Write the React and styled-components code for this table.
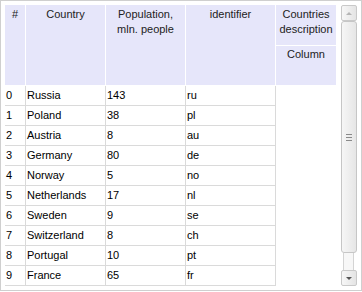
import React from 'react';
import styled, { createGlobalStyle } from 'styled-components';

const Global = createGlobalStyle`
    body {
        margin: 0;
        background: white;
        font-family: "Liberation Sans", Arial, sans-serif;
    }
`;

const Frame = styled.div`
    box-sizing: border-box;
    width: 362px;
    height: 291px;
    border: 1px solid #cfcfcf;
    padding: 4px;
    display: flex;
    gap: 4px;
    background: white;
`;

const Grid = styled.div`
    display: grid;
    grid-template-columns: 21px 80px 80px 90px 60px;
    grid-template-rows: 41px 40px repeat(10, 20px);
    font-size: 11px;
    color: #000;
    align-self: flex-start;
`;

const HeadCell = styled.div`
    box-sizing: border-box;
    background: #e6e6fa;
    border-bottom: 1px solid white;
    border-right: ${p => (p.$last ? 'none' : '1px solid white')};
    grid-row: ${p => p.$rows || 'span 2'};
    text-align: center;
    line-height: 15px;
    padding-top: ${p => p.$top || 2}px;
    color: #222;
`;

const Cell = styled.div`
    box-sizing: border-box;
    border-right: 1px solid #dadada;
    border-bottom: 1px solid #dadada;
    line-height: 18px;
    padding-left: 1px;
    white-space: nowrap;
    overflow: hidden;
`;

const Blank = styled.div`
    grid-row: span 10;
    background: white;
`;

const Scroll = styled.div`
    width: 17px;
    height: 281px;
    display: flex;
    flex-direction: column;
    align-items: center;
`;

const Arrow = styled.div`
    box-sizing: border-box;
    width: 16px;
    height: 16px;
    border: 1px solid #c9c9c9;
    border-radius: 2px;
    background: linear-gradient(to right, #f7f7f7, #e4e4e4);
    display: flex;
    align-items: center;
    justify-content: center;
    flex-shrink: 0;

    &::after {
        content: '';
        border-left: 3px solid transparent;
        border-right: 3px solid transparent;
        ${p => (p.$down
            ? 'border-top: 3px solid #555;'
            : 'border-bottom: 3px solid #b5b5b5;')}
    }
`;

const Thumb = styled.div`
    box-sizing: border-box;
    width: 16px;
    height: 232px;
    border: 1px solid #c6c6c6;
    border-radius: 3px;
    background: linear-gradient(to right, #f6f6f6, #e6e6e6);
    display: flex;
    flex-direction: column;
    align-items: center;
    justify-content: center;
    gap: 2px;
`;

const Grip = styled.span`
    width: 6px;
    height: 1px;
    background: #8a8a8a;
`;

const Track = styled.div`
    box-sizing: border-box;
    width: 11px;
    flex: 1;
    border-left: 1px solid #d4d4d4;
    border-right: 1px solid #d4d4d4;
    background: #f7f7f7;
`;

const rows = [
    ['Russia', 143, 'ru'],
    ['Poland', 38, 'pl'],
    ['Austria', 8, 'au'],
    ['Germany', 80, 'de'],
    ['Norway', 5, 'no'],
    ['Netherlands', 17, 'nl'],
    ['Sweden', 9, 'se'],
    ['Switzerland', 8, 'ch'],
    ['Portugal', 10, 'pt'],
    ['France', 65, 'fr'],
];

function App() {
    return (
        <>
            <Global />
            <Frame>
                <Grid>
                    <HeadCell>#</HeadCell>
                    <HeadCell>Country</HeadCell>
                    <HeadCell>Population,<br />mln. people</HeadCell>
                    <HeadCell>identifier</HeadCell>
                    <HeadCell $last $rows="span 1">Countries<br />description</HeadCell>
                    <HeadCell $last $rows="span 1" $top={1}>Column</HeadCell>
                    {rows.map((r, i) => (
                        <React.Fragment key={r[2]}>
                            <Cell>{i}</Cell>
                            <Cell>{r[0]}</Cell>
                            <Cell>{r[1]}</Cell>
                            <Cell>{r[2]}</Cell>
                            {i === 0 && <Blank />}
                        </React.Fragment>
                    ))}
                </Grid>
                <Scroll>
                    <Arrow />
                    <Thumb>
                        <Grip />
                        <Grip />
                        <Grip />
                    </Thumb>
                    <Track />
                    <Arrow $down />
                </Scroll>
            </Frame>
        </>
    );
}

export default App;
